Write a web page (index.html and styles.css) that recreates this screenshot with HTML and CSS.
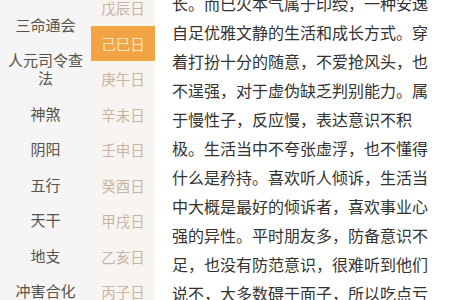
FILE: index.html
```html
<!DOCTYPE html>
<html lang="zh-CN">
<head>
<meta charset="utf-8">
<title>日柱</title>
<link rel="stylesheet" href="styles.css">
</head>
<body>
<div class="page">
  <nav class="cats">
    <div class="cat">三命通会</div>
    <div class="cat">人元司令查法</div>
    <div class="cat">神煞</div>
    <div class="cat">阴阳</div>
    <div class="cat">五行</div>
    <div class="cat">天干</div>
    <div class="cat">地支</div>
    <div class="cat">冲害合化</div>
  </nav>
  <nav class="days">
    <div class="day">戊辰日</div>
    <div class="day active">己巳日</div>
    <div class="day">庚午日</div>
    <div class="day">辛未日</div>
    <div class="day">壬申日</div>
    <div class="day">癸酉日</div>
    <div class="day">甲戌日</div>
    <div class="day">乙亥日</div>
    <div class="day">丙子日</div>
  </nav>
  <main class="content">
    <p class="text">长。而巳火本气属于印绶，一种安逸自足优雅文静的生活和成长方式。穿着打扮十分的随意，不爱抢风头，也不逞强，对于虚伪缺乏判别能力。属于慢性子，反应慢，表达意识不积极。生活当中不夸张虚浮，也不懂得什么是矜持。喜欢听人倾诉，生活当中大概是最好的倾诉者，喜欢事业心强的异性。平时朋友多，防备意识不足，也没有防范意识，很难听到他们说不，大多数碍于面子，所以吃点亏</p>
  </main>
</div>
</body>
</html>
```

FILE: styles.css
```css
* { box-sizing: border-box; }
html, body {
  margin: 0;
  padding: 0;
  width: 450px;
  height: 300px;
  overflow: hidden;
  background: #fff;
}
body {
  font-family: "Noto Sans CJK SC", "Noto Sans", sans-serif;
}
.page {
  display: flex;
  height: 300px;
  overflow: hidden;
}
.cats {
  width: 91px;
  flex: none;
  background: #f5f5f5;
  padding-top: 7px;
}
.cat {
  padding: 8.75px 6px;
  font-size: 15px;
  line-height: 18px;
  color: #57524a;
  text-align: center;
}
.days {
  width: 64px;
  flex: none;
  background: #f8f4f1;
}
.day {
  height: 35.5px;
  display: flex;
  align-items: center;
  justify-content: center;
  font-size: 14.5px;
  color: #c8b4a4;
}
.day:first-child {
  margin-top: -10px;
}
.day.active {
  background: #f2a445;
  color: #ffe6bf;
}
.content {
  flex: 1;
  padding: 0 18px 0 17px;
}
.text {
  margin: -11.5px 0 0;
  font-size: 16px;
  line-height: 29px;
  color: #333;
}
```
